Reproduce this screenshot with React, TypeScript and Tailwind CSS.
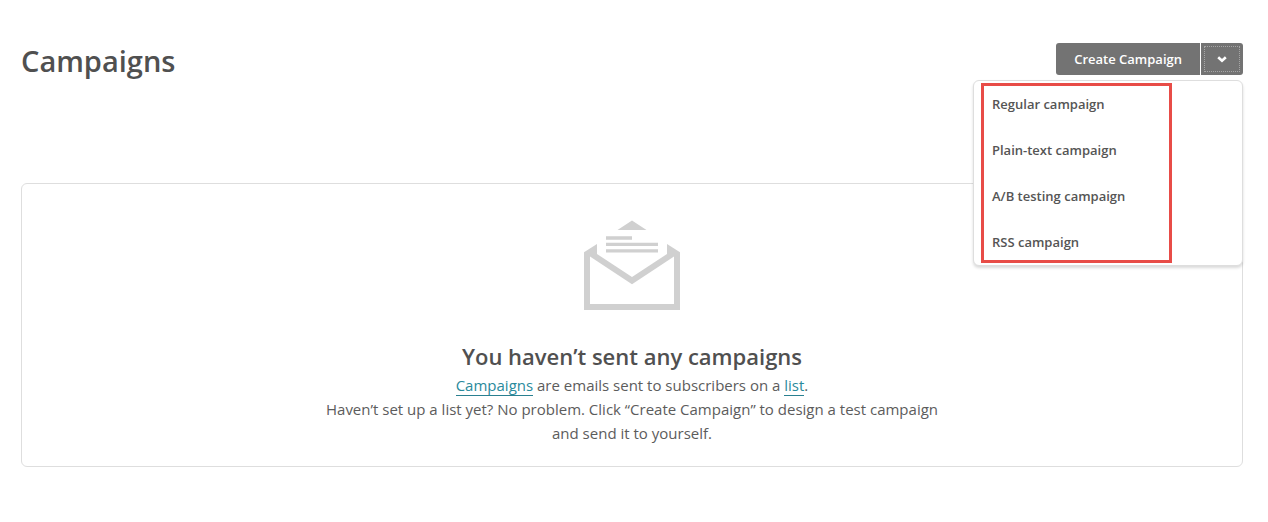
import React, { useState } from 'react';

const campaignTypes = [
  'Regular campaign',
  'Plain-text campaign',
  'A/B testing campaign',
  'RSS campaign',
];

const EnvelopeIcon: React.FC = () => (
  <svg width="96" height="90" viewBox="0 0 96 90" fill="#d0d0d0" aria-hidden="true">
    <path d="M48 .5 62.5 10h-29z" />
    <path d="M22 16.3h26v3.4H22zM22 22.7h52V26H22zM22 29.2h52v3.4H22z" />
    <path
      fillRule="evenodd"
      d="M0 32.3 13 24v10l35 23 35-23V24l13 8.3V90H0zM6 36.5V84h84V36.5L48 64.3z"
    />
  </svg>
);

const CreateMenu: React.FC = () => {
  const [open, setOpen] = useState(true);

  return (
    <div className="relative flex gap-px">
      <button
        type="button"
        className="h-8 rounded-l-[3px] bg-[#737373] px-[18px] pt-0.5 text-[13px] font-semibold text-white"
      >
        Create Campaign
      </button>
      <button
        type="button"
        aria-label="Campaign types"
        aria-expanded={open}
        onClick={() => setOpen(!open)}
        className="h-8 w-[42px] rounded-r-[3px] bg-[#737373] p-[3px] text-white"
      >
        <span className="flex h-full items-center justify-center border border-dotted border-[#a6a6a6]">
          <svg width="10" height="7" viewBox="0 0 10 7" fill="none" stroke="currentColor" strokeWidth="2.6">
            <path d="M1.2 1.2 5 4.8l3.8-3.6" />
          </svg>
        </span>
      </button>
      {open && (
        <div className="absolute top-full right-0 mt-[5px] w-[270px] rounded-md border border-[#dedede] bg-white shadow-[0_2px_3px_rgba(0,0,0,0.15)]">
          <ul>
            {campaignTypes.map((type) => (
              <li key={type}>
                <button
                  type="button"
                  className="h-[46px] w-full px-[18px] pt-0.5 text-left text-[13px] font-semibold text-[#555555]"
                >
                  {type}
                </button>
              </li>
            ))}
          </ul>
          {/* highlight around the campaign types */}
          <div className="pointer-events-none absolute top-[2px] bottom-[2px] left-[7px] w-[191px] border-3 border-[#e84c47]" />
        </div>
      )}
    </div>
  );
};

const App: React.FC = () => {
  const link = 'border-b border-[#2a8090] text-[#2a8a9c]';

  return (
    <main className="bg-white pt-[43px] pr-[25px] pb-14 pl-[21px] font-['Open_Sans','Noto_Sans',sans-serif] text-[#4a4a4a]">
      <header className="flex items-start justify-between">
        <h1 className="text-[29px] leading-9 font-semibold text-[#505050]">Campaigns</h1>
        <CreateMenu />
      </header>

      <section className="mt-[104px] flex flex-col items-center rounded-md border border-[#dedede] px-6 pt-9 pb-[21px] text-center">
        <EnvelopeIcon />
        <h2 className="mt-8 mb-[3px] text-[22px] leading-7 font-semibold text-[#505050]">
          You haven’t sent any campaigns
        </h2>
        <p className="max-w-[640px] text-[15px] leading-6 text-[#5c5c5c]">
          <a href="#campaigns" className={link}>Campaigns</a> are emails sent to subscribers on a{' '}
          <a href="#lists" className={link}>list</a>.
          <br />
          Haven’t set up a list yet? No problem. Click “Create Campaign” to design a test campaign
          and send it to yourself.
        </p>
      </section>
    </main>
  );
};

export default App;
